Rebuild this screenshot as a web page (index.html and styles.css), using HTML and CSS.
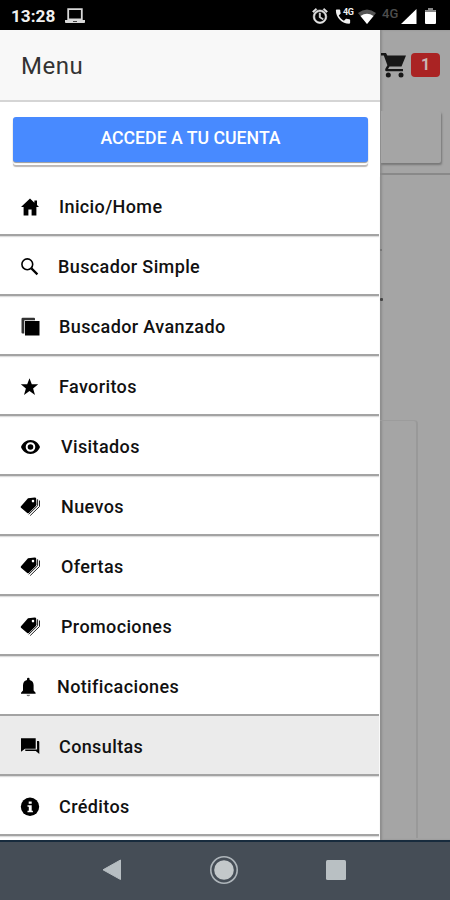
FILE: index.html
```html
<!DOCTYPE html>
<html lang="es">
<head>
<meta charset="utf-8">
<title>Menu</title>
<link rel="stylesheet" href="styles.css">
</head>
<body>
<div class="phone">
  <header class="status">
    <span class="clock">13:28</span>
    <svg class="laptop" width="20" height="16" viewBox="0 0 20 16"><path d="M3.2 1.200h13.600v10.300H3.200z" fill="none" stroke="#d8d8d8" stroke-width="1.800"/><path d="M0 12h20v2.200q0 .8-1 .8H1q-1 0-1-.8z" fill="#d8d8d8"/><path d="M8 13h4v1H8z" fill="#444"/></svg>
    <div class="signals">
      <svg width="18" height="18" viewBox="0 0 24 24" fill="#e5e5e5"><path d="M22 5.720l-4.600-3.860-1.290 1.530 4.600 3.860L22 5.720zM7.880 3.390L6.600 1.860 2 5.710l1.290 1.530 4.590-3.850zM12.500 8H11v6l4.750 2.850.75-1.230-4-2.370V8zM12 4c-4.970 0-9 4.030-9 9s4.020 9 9 9a9 9 0 0 0 0-18zm0 16c-3.870 0-7-3.130-7-7s3.130-7 7-7 7 3.130 7 7-3.130 7-7 7z" stroke="#e5e5e5" stroke-width=".8"/></svg>
      <span class="call"><svg width="20" height="19" viewBox="0 0 24 24" fill="#f0f0f0"><path d="M6.620 10.790c1.440 2.830 3.760 5.140 6.590 6.590l2.200-2.200c.27-.27.67-.36 1.020-.24 1.120.37 2.330.57 3.570.57.55 0 1 .45 1 1V20c0 .55-.45 1-1 1C10.610 21 3 13.390 3 4c0-.55.45-1 1-1h3.500c.55 0 1 .45 1 1 0 1.250.2 2.450.57 3.570.11.35.03.74-.25 1.020l-2.200 2.200z"/></svg><b>4G</b></span>
      <svg class="wifi" width="18" height="15" viewBox="0 0 18 15"><path d="M0 4Q9-3 18 4L9 15z" fill="#555"/><path d="M2.500 7Q9 2.500 15.500 7L9 15z" fill="#fff"/></svg>
      <span class="net">4G</span>
      <svg class="cell" width="16" height="15" viewBox="0 0 16 15"><path d="M15.500 0v15H0z" fill="#fff"/></svg>
      <svg class="battery" width="11" height="16" viewBox="0 0 11 16"><path d="M3 0h5v2h2q1 0 1 1v12q0 1-1 1H1q-1 0-1-1V3q0-1 1-1h2z" fill="#fff"/><path d="M0 4V3q0-1 1-1h2V0h5v2h2q1 0 1 1v1z" fill="#888"/></svg>
    </div>
  </header>

  <main class="body">
    <nav class="drawer">
      <h1 class="title">Menu</h1>
      <div class="login"><button>ACCEDE A TU CUENTA</button></div>
      <ul class="menu">
        <li><svg viewBox="0 0 20 20"><path d="M10 1.500L1 10h2.600v8.500h4.800v-6h3.200v6h4.800V10H19l-2-1.900V3.500h-2.600v2.200z"/></svg><span class="t59">Inicio/Home</span></li>
        <li><svg viewBox="0 0 20 20"><circle cx="7.300" cy="7.300" r="5.400" fill="none" stroke="#000" stroke-width="1.600"/><path d="M11.400 11.400l6 6" stroke="#000" stroke-width="2.200"/></svg><span class="t58">Buscador Simple</span></li>
        <li><svg viewBox="0 0 20 20"><path d="M5 4h14.500v14.500H5z"/><path d="M4.300 16.500H2.500q-1 0-1-1V2q0-1.200 1.200-1.200H14q1 0 1 1v1.500H4.300z" fill="#333"/></svg><span class="t59">Buscador Avanzado</span></li>
        <li><svg viewBox="0 0 20 20"><path d="M9.500 1.200l2.300 6.100h6.400l-5.100 4.100 1.900 6.600-5.500-3.900L4 18l1.900-6.600-5.100-4.100h6.400z"/></svg><span class="t59">Favoritos</span></li>
        <li><svg viewBox="0 0 20 20"><path fill-rule="evenodd" d="M10.500 3C6 3 2.500 6 1 10c1.500 4 5 7 9.500 7s8-3 9.500-7c-1.500-4-5-7-9.500-7zm0 2.200a4.800 4.800 0 1 1 0 9.600 4.800 4.800 0 0 1 0-9.600zm0 2a2.800 2.800 0 1 0 0 5.600 2.800 2.800 0 0 0 0-5.600z"/></svg><span class="t61">Visitados</span></li>
        <li><svg viewBox="0 0 20 20"><use href="#tags"/></svg><span class="t61">Nuevos</span></li>
        <li><svg viewBox="0 0 20 20"><use href="#tags"/></svg><span class="t61">Ofertas</span></li>
        <li><svg viewBox="0 0 20 20"><use href="#tags"/></svg><span class="t61">Promociones</span></li>
        <li><svg viewBox="0 0 20 20"><path d="M1 16.800v-1l2-2.300V8.300q0-4.400 4-5.400V2q0-1.200 1.300-1.200T9.600 2v.9q4 1 4 5.400v5.200l2 2.300v1z"/><path d="M6.500 17.700h3.600q-.3 1.500-1.800 1.500t-1.800-1.500z" fill="#777"/></svg><span class="t57">Notificaciones</span></li>
        <li class="active"><svg viewBox="0 0 20 20"><path d="M1 1.200h14.700v10.500H5L1 14.700z"/><path d="M17 4h1.300q1 0 1 1v12l-3.500-3H6q-.9 0-.9-.8v-.7h12z"/></svg><span class="t59">Consultas</span></li>
        <li><svg viewBox="0 0 20 20"><circle cx="10" cy="9.700" r="9.200"/><path d="M8.700 4.500h3v2.300h-3zM7.500 8.300h4.200v5.500h1.200v1.400H7.500v-1.400h1.300V9.700H7.500z" fill="#fff"/></svg><span class="t59">Créditos</span></li>
      </ul>
    </nav>
    <section class="page">
      <div class="toolbar">
        <svg width="26" height="26" viewBox="0 0 26 26" fill="#171717"><path d="M0 1h5l1.300 2.500H25L20.500 14.500H8.500L7 17h15v2.300H5.500q-2-.4-1-2.800l1.900-3.300L2.800 3.400H0z"/><circle cx="7.300" cy="23" r="2.500"/><circle cx="20" cy="23" r="2.500"/></svg>
        <span class="badge">1</span>
      </div>
      <div class="search"><div class="field"></div></div>
      <div class="content"><i class="speck"></i><i class="speck big"></i><div class="card"></div></div>
    </section>
  </main>

  <footer class="navbar">
    <svg width="20" height="22" viewBox="0 0 20 22"><path d="M18.500 1v19.500L1 10.800z" fill="#b7bec2" stroke="#b7bec2" stroke-linejoin="round"/></svg>
    <svg width="30" height="30" viewBox="0 0 30 30"><circle cx="15" cy="15" r="13.200" fill="none" stroke="#aeb5ba" stroke-width="1.600"/><circle cx="15" cy="15" r="9.800" fill="#c3c8ca"/></svg>
    <svg width="20" height="20" viewBox="0 0 20 20"><rect width="20" height="20" rx="1.500" fill="#b9c0c3"/></svg>
  </footer>
</div>
<svg class="defs" width="0" height="0"><defs><g id="tags"><path fill-rule="evenodd" d="M8 1.200L14.800.5q1.400 0 1.400 1.200l.3 5.800q0 .8-.6 1.400l-7 7.100q-.9.700-1.700 0L1 10.700q-.6-.8 0-1.500zM13 2.800a1.300 1.300 0 1 0 0 2.600 1.300 1.300 0 0 0 0-2.600z"/><path d="M17.600 2.300v6.400L8.700 17.300M19.500 3.500v6L10.200 18.600" fill="none" stroke="#222" stroke-width="1"/></g></defs></svg>
</body>
</html>
```
FILE: styles.css
```css
* { box-sizing: border-box; }
body { margin: 0; font-family: Roboto, "Liberation Sans", sans-serif; color: #111; }
svg { display: block; flex: none; }
.defs { position: absolute; }
.phone { width: 450px; height: 900px; display: flex; flex-direction: column; overflow: hidden; background: #fff; }

.status { height: 30px; background: #000; color: #f0f0f0; display: flex; align-items: center; padding: 2px 14px 0 11px; }
.clock { font-size: 17.2px; font-weight: 700; line-height: 28px; width: 44px; white-space: nowrap; }
.laptop { margin-left: 10px; }
.signals { margin-left: auto; display: flex; align-items: center; }
.call { display: flex; margin-left: 4px; width: 21px; }
.call b { font-size: 9px; line-height: 10px; margin-left: -10px; letter-spacing: -.4px; }
.wifi { margin-left: 4px; }
.net { font-size: 13px; line-height: 14px; color: #4d4d4d; font-weight: 500; margin: -5px 0 0 6px; width: 18px; }
.cell { margin-left: 1px; }
.battery { margin-left: 8px; }

.body { height: 810px; display: flex; }
.drawer { width: 380px; height: 810px; overflow: hidden; background: #fff; }
.title { margin: 0; height: 72px; padding: 1px 21px 0; background: #f8f8f8; border-bottom: 2px solid #d5d5d5; font-size: 24px; line-height: 71px; font-weight: 400; color: #333; letter-spacing: .5px; }
.login { height: 74px; padding: 15px 12px 0 13px; }
.login button { display: block; width: 100%; height: 45px; border: 0; border-radius: 3px; padding: 0 0 2px; background: #488aff; color: #fff; font: 500 17.7px/43px Roboto, sans-serif; box-shadow: 0 1px 1px #999, 0 3px 0 #fff, 0 5px 1px #bdb8b6; }
.menu { list-style: none; margin: 0; padding: 0; }
.menu li { height: 60px; display: flex; align-items: center; padding: 3px 0 0 20px; margin-right: 1px; border-bottom: 2px solid #a3a3a3; box-shadow: 0 1px 1px #ddd; font-size: 18px; font-weight: 500; line-height: 25px; letter-spacing: .38px; }
.menu svg { width: 20px; height: 20px; }
.menu .active { background: #ebebeb; }
.t57 { margin-left: 17px; }
.t58 { margin-left: 18px; }
.t59 { margin-left: 19px; }
.t61 { margin-left: 21px; }

.page { width: 70px; height: 810px; background: #a5a5a5; box-shadow: inset 2px 0 2px #8e8e8e; }
.toolbar { height: 72px; display: flex; align-items: center; padding: 0 0 2px 1px; gap: 4px; }
.badge { width: 29px; height: 24px; border-radius: 4px; background: #aa2323; color: #c9b5b1; font-size: 16px; font-weight: 700; line-height: 24px; text-align: center; }
.search { height: 73px; padding: 9px 9px 0 0; border-bottom: 2px solid #898989; }
.field { height: 52px; border-radius: 0 2px 2px 0; box-shadow: 1px 2px 2px #787878; background: #a5a5a5; clip-path: inset(0 -4px -5px 1px); }
.content { height: 665px; padding-top: 74px; }
.speck { display: block; width: 2px; height: 2px; background: #777; }
.speck.big { width: 3px; height: 3px; margin-top: 47px; background: #444; border-radius: 1px; }
.card { margin-top: 119px; height: 418px; width: 38px; border-top: 1px solid #9c9c9c; border-right: 2px solid #999; border-radius: 0 4px 0 0; }

.navbar { height: 60px; background: #454d56; border-top: 2px solid #172b3d; display: flex; align-items: center; gap: 87px; padding: 0 0 2px 102px; }
```
